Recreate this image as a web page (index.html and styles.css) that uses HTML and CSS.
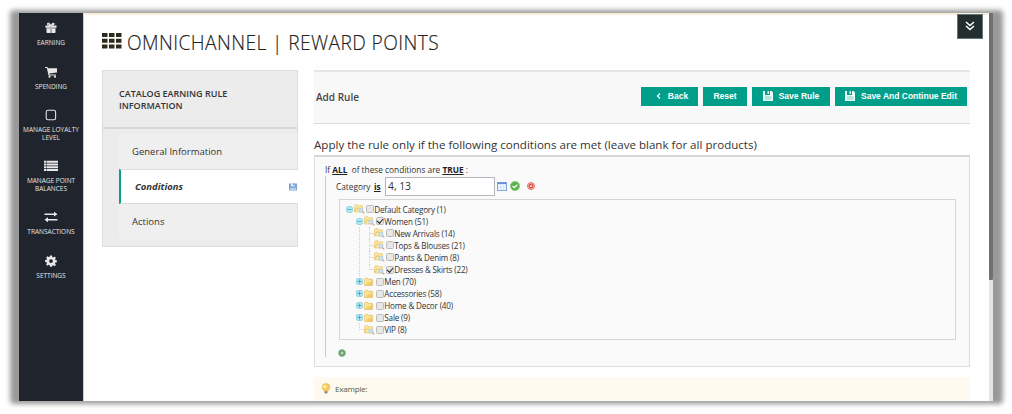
FILE: index.html
```
<!DOCTYPE html>
<html lang="en">
<head>
<meta charset="utf-8">
<title>Omnichannel | Reward Points</title>
<link rel="stylesheet" href="styles.css">
</head>
<body>
<svg width="0" height="0" class="defs">
  <defs>
    <linearGradient id="fold" x1="0" y1="0" x2="1" y2="1"><stop offset="0" stop-color="#fdeeb0"/><stop offset="1" stop-color="#f0bf45"/></linearGradient>
    <symbol id="folder" viewBox="0 0 11 10"><path d="M.5 8.500V2L1.200 1.200H3.800L4.700 2.300H8.300V3.500H9L8.400 8.500Z" fill="url(#fold)" stroke="#e3bd68" stroke-width=".7"/><path d="M1.200 8 2.200 4.200H8.500" fill="none" stroke="#fff3c5" stroke-width=".6"/></symbol>
    <symbol id="folder-search" viewBox="0 0 11 10"><path d="M.5 8V1.500L1.200.7H3.800L4.700 1.800H8.600V8Z" fill="#fae7a6" stroke="#e6c576" stroke-width=".7"/><path d="M1 7.500 2.500 4H5" fill="none" stroke="#eebd50" stroke-width=".8"/><circle cx="6.900" cy="6.100" r="2" fill="#c9e4fa" stroke="#9fc5e8" stroke-width=".7"/><path d="m8.500 7.700 1.800 1.700" stroke="#c49b72" stroke-width="1.100"/></symbol>
    <symbol id="minus" viewBox="0 0 7 7"><rect x=".5" y=".5" width="6" height="6" rx="1.800" fill="#b5e6f0" stroke="#8fd3e2" stroke-width=".9"/><path d="M1.500 3.500h4" stroke="#45adc3" stroke-width=".8"/></symbol>
    <symbol id="plus" viewBox="0 0 7 7"><rect x=".5" y=".5" width="6" height="6" rx="1.500" fill="#b5e6f0" stroke="#8fd3e2" stroke-width=".9"/><path d="M1.500 3.500h4M3.500 1.500v4" stroke="#2fa3bb" stroke-width=".8"/></symbol>
    <symbol id="disk" viewBox="0 0 10 10"><path d="M0 0H2V4H7V0H8.500L10 1.500V10H0Z" fill="#e8fffa"/><path d="M4.500 .2h1.500v2.600H4.500z" fill="#fff"/><path d="M2 6h6.500M2 8h6.500" stroke="#58b9a9" stroke-width=".7"/></symbol>
  </defs>
</svg>
<div class="window">
  <nav class="rail">
    <a class="rail-item earning"><svg viewBox="0 0 12 12"><path d="M1.500 6.300H5V11H2.200Q1.500 11 1.500 10.300ZM7 6.300h3.500v4q0 .7-.7.700H7ZM.5 3.500h4.600v2.200H.5ZM6.900 3.500h4.600v2.200H6.900ZM5.300 3.500h1.400V11H5.300Z"/><path d="M5.600 3.400Q3.900.4 2.700 1.400 1.700 3 5.600 3.400 9.700 3 9 1.500 7.800.5 6.300 3.400" fill="none" stroke="#e8e8e8" stroke-width="1.100"/></svg><span>EARNING</span></a>
    <a class="rail-item spending"><svg viewBox="0 0 12 12"><path d="M0 1h2.500l.4 1.200H12V6.500L4.300 7.500l.2 1H11v1H3.500L1.900 2H0Z"/><circle cx="4.500" cy="10.700" r="1.100"/><circle cx="9.900" cy="10.700" r="1.100"/></svg><span>SPENDING</span></a>
    <a class="rail-item level"><svg viewBox="0 0 12 12"><rect x="1.200" y="1.200" width="9.400" height="9.600" rx="1.700" fill="none" stroke="#e2e2e2" stroke-width="1.100"/></svg><span>MANAGE LOYALTY<br>LEVEL</span></a>
    <a class="rail-item balances"><svg viewBox="0 0 14 12"><path d="M0 .8h2v2H0zM2.500 .8H14v2H2.500zM0 3.500h2v2H0zM2.500 3.500H14v2H2.500zM0 6.200h2v2H0zM2.500 6.200H14v2H2.500zM0 8.900h2v2H0zM2.500 8.900H14v2H2.500z"/></svg><span>MANAGE POINT<br>BALANCES</span></a>
    <a class="rail-item transactions"><svg viewBox="0 0 14 12"><path d="M.5 2.500H10V.7l3.500 2.500L10 5.600V4H.5ZM13.500 8H4V6.300L.5 8.800 4 11.200V9.500h9.500Z"/></svg><span>TRANSACTIONS</span></a>
    <a class="rail-item settings"><svg viewBox="0 0 12 12"><path fill-rule="evenodd" d="M5 .5h2l.3 1.600 1 .4L9.700 1.600l1.200 1.300-.9 1.300.4.900 1.500.3v1.900l-1.500.3-.4 1 .9 1.300-1.300 1.300-1.300-.9-1 .4L7 11.700H5l-.3-1.500-1-.4-1.300.9L1.100 9.400 2 8.100l-.4-.9L.1 6.900V5l1.500-.3.400-1-.9-1.300 1.300-1.200 1.300.9 1-.4ZM6 4.200A1.900 1.900 0 1 0 6 8a1.900 1.900 0 0 0 0-3.800Z"/></svg><span>SETTINGS</span></a>
  </nav>
  <div class="page">
    <header class="title-row">
      <svg class="grid-icon" viewBox="0 0 20 16"><path d="M0 0h5.500v4H0zM7 0h5.500v4H7zM14 0h5.500v4H14zM0 5.700h5.500v4H0zM7 5.700h5.500v4H7zM14 5.700h5.500v4H14zM0 11.400h5.500v4H0zM7 11.400h5.500v4H7zM14 11.400h5.500v4H14z" fill="#2c2a1d"/></svg>
      <h1>OMNICHANNEL | REWARD POINTS</h1>
      <button class="collapse" aria-label="Expand"><svg viewBox="0 0 10 10"><path d="m1 1 4 3.500L9 1M1 5l4 3.500L9 5" fill="none" stroke="#fff" stroke-width="1.500"/></svg></button>
    </header>
    <div class="columns">
      <aside class="side">
        <h2>CATALOG EARNING RULE<br>INFORMATION</h2>
        <ul>
          <li>General Information</li>
          <li class="active"><span>Conditions</span><svg class="save-mark" viewBox="0 0 8 8"><path d="M0 .5h8v7H0z" fill="#7fa4d8"/><path d="M2 .5h4v3H2z" fill="#dbe9f9"/><path d="M4.500.5h1v2h-1z" fill="#3d6eb5"/><path d="M1 5h6v2.500H1z" fill="#b9d0ed"/></svg></li>
          <li>Actions</li>
        </ul>
      </aside>
      <main>
        <div class="toolbar">
          <h3>Add Rule</h3>
          <div class="buttons">
            <button class="btn back"><svg viewBox="0 0 5 8"><path d="M4 1.500 1.500 4 4 6.500" fill="none" stroke="#fff" stroke-width="1.200"/></svg><span>Back</span></button>
            <button class="btn reset"><span>Reset</span></button>
            <button class="btn save"><svg><use href="#disk"/></svg><span>Save Rule</span></button>
            <button class="btn continue"><svg><use href="#disk"/></svg><span>Save And Continue Edit</span></button>
          </div>
        </div>
        <h4>Apply the rule only if the following conditions are met (leave blank for all products)</h4>
        <section class="rule">
          <p class="if-line">If <b>ALL</b>&nbsp; of these conditions are <b>TRUE</b> :</p>
          <div class="branch">
            <div class="condition"><span class="cat">Category</span><b>is</b><input type="text" value="4, 13">
              <svg class="picker" viewBox="0 0 10 9"><rect x=".5" y=".5" width="9" height="8" fill="#edf4fd" stroke="#7fa3da"/><path d="M.5 1.300h9" stroke="#6791d2" stroke-width="1.600"/><path d="M3.500 2.500v6M6.500 2.500v6M1 5h8" stroke="#d0e0f5" stroke-width=".6"/></svg>
              <svg class="ok" viewBox="0 0 10 10"><circle cx="5" cy="5" r="4.600" fill="#58b34e" stroke="#8cc985" stroke-width=".8"/><path d="m2.600 5 1.800 1.700 3-3.100" fill="none" stroke="#fff" stroke-width="1.300"/></svg>
              <svg class="no" viewBox="0 0 8 8"><circle cx="4" cy="4" r="3.500" fill="#f3b0aa" stroke="#e8766d"/><circle cx="4" cy="4" r="2.300" fill="#dd4f46"/><path d="m3 3 2 2m0-2L3 5" stroke="#ffe5df" stroke-width=".8"/></svg>
            </div>
            <div class="tree">
              <div class="node"><svg class="tog"><use href="#minus"/></svg><svg class="fs"><use href="#folder-search"/></svg><i class="box"></i>Default Category (1)</div>
              <div class="children">
                <div class="node"><svg class="tog"><use href="#minus"/></svg><svg class="fs"><use href="#folder-search"/></svg><i class="box checked"></i>Women (51)</div>
                <div class="children leafs">
                  <div class="node"><i class="twig"></i><svg class="fs"><use href="#folder-search"/></svg><i class="box"></i>New Arrivals (14)</div>
                  <div class="node"><i class="twig"></i><svg class="fs"><use href="#folder-search"/></svg><i class="box"></i>Tops &amp; Blouses (21)</div>
                  <div class="node"><i class="twig"></i><svg class="fs"><use href="#folder-search"/></svg><i class="box"></i>Pants &amp; Denim (8)</div>
                  <div class="node"><i class="twig last"></i><svg class="fs"><use href="#folder-search"/></svg><i class="box checked"></i>Dresses &amp; Skirts (22)</div>
                </div>
                <div class="node"><svg class="tog"><use href="#plus"/></svg><svg class="fs"><use href="#folder"/></svg><i class="box"></i>Men (70)</div>
                <div class="node"><svg class="tog"><use href="#plus"/></svg><svg class="fs"><use href="#folder"/></svg><i class="box"></i>Accessories (58)</div>
                <div class="node"><svg class="tog"><use href="#plus"/></svg><svg class="fs"><use href="#folder"/></svg><i class="box"></i>Home &amp; Decor (40)</div>
                <div class="node"><svg class="tog"><use href="#plus"/></svg><svg class="fs"><use href="#folder"/></svg><i class="box"></i>Sale (9)</div>
                <div class="node end"><i class="elbow"></i><svg class="fs"><use href="#folder-search"/></svg><i class="box"></i>VIP (8)</div>
              </div>
            </div>
            <svg class="add" viewBox="0 0 8 8"><circle cx="4" cy="4" r="3.500" fill="#5c965d" stroke="#a2c6a2" stroke-width=".9"/><path d="M4 2.200v3.600M2.200 4h3.600" stroke="#d9f0d6" stroke-width=".9"/></svg>
          </div>
        </section>
        <div class="hint"><svg viewBox="0 0 10 11"><path d="M5 .5a4 4 0 0 1 4 4C9 6.500 7 7 6.800 8.300H3.200C3 7 1 6.500 1 4.500a4 4 0 0 1 4-4Z" fill="#f8c95c" stroke="#eeb65a" stroke-width=".6"/><circle cx="3.800" cy="3.600" r="1.700" fill="#fff3bd"/><path d="M3.400 8.300h3.200v1.500L5.800 10.500H4.200l-.8-.7z" fill="#8b8b94"/></svg><span>Example:</span></div>
      </main>
    </div>
  </div>
  <div class="scrollbar"><div class="thumb"></div></div>
</div>
</body>
</html>
```
FILE: styles.css
```
* { box-sizing: border-box; }
body { margin: 0; width: 1012px; height: 414px; overflow: hidden; padding: 13px 19px; background: #fff; position: relative; font-family: "Open Sans", sans-serif; color: #333; }
body::before { content: ""; position: absolute; left: 10px; top: 10px; width: 993px; height: 394px; border-radius: 4px; background: #999; filter: blur(2.8px); }
h1, h2, h3, h4, p, ul { margin: 0; padding: 0; font-weight: 400; }
svg { display: block; flex: none; }
button { border: 0; padding: 0; }
.defs { position: absolute; }
.window { position: relative; width: 974px; height: 388px; display: flex; background: #fff; overflow: hidden; }
.rail { width: 64px; flex: none; background: #20252d; display: flex; flex-direction: column; color: #e4e4e4; font-size: 6.500px; line-height: 8px; text-align: center; }
.rail-item { display: flex; flex-direction: column; align-items: center; gap: 5px; height: 43px; white-space: nowrap; }
.rail-item svg { height: 12px; width: 14px; fill: #e8e8e8; }
.earning { padding-top: 9px; height: 52.500px; }
.level { height: 51px; }
.balances { height: 51.500px; }
.transactions { height: 43.500px; }
.page { width: 905px; flex: none; border-top: 2px solid #faeedd; border-left: 1px solid #ccc; padding-left: 18px; }
.title-row { display: flex; height: 55px; align-items: flex-start; }
.grid-icon { width: 20px; height: 16px; margin-top: 18px; }
h1 { flex: 1; margin: 14px 0 0 5px; font-size: 19.200px; letter-spacing: .4px; line-height: 28px; font-weight: 300; color: #22221b; -webkit-text-stroke: .15px #22221b; white-space: nowrap; }
.collapse { width: 26px; height: 25px; margin: -1px 5px 0 0; background: #232e2e; border: 1px solid #677; display: flex; justify-content: center; align-items: center; padding-bottom: 2px; }
.collapse svg { width: 10px; height: 10px; }
.columns { display: flex; gap: 16px; }
.side { width: 196px; height: 177px; background: #ececec; border: 1px solid #dddee1; border-right-color: #dcdfe5; }
.side h2 { height: 58px; padding: 17px 0 0 16px; border-bottom: 2px solid #d6d7d9; font-size: 9px; line-height: 12px; font-weight: 600; color: #333; white-space: nowrap; }
.side ul { list-style: none; margin: 5px 0 0 16px; font-size: 9.500px; background: #efefef; }
.side li { height: 35px; padding-left: 13px; display: flex; align-items: center; }
.side .active { background: #fff; border: 1px solid #dadcdd; border-width: 1px 0; border-left: 2px solid #08a183; font-style: italic; font-weight: 700; margin-right: -1px; padding: 0 1px 0 14px; justify-content: space-between; }
.save-mark { width: 8px; height: 8px; }
main { width: 656px; }
.toolbar { height: 54px; background: #f8f8f8; border-top: 2px solid #e6e6e6; border-bottom: 1px solid #ddd; display: flex; justify-content: space-between; padding: 0 3px 3px 2px; align-items: center; }
.toolbar h3 { font-size: 10px; font-weight: 600; color: #444; padding-top: 2px; }
.buttons { display: flex; gap: 5px; }
.btn { height: 19px; background: #019f8a; color: #fff; font: bold 8.500px "Liberation Sans", sans-serif; display: flex; align-items: center; justify-content: center; white-space: nowrap; }
.btn svg { width: 10px; height: 10px; }
.back { width: 57px; gap: 7px; padding-left: 5px; }
.back svg { width: 5px; height: 8px; }
.reset { width: 44px; }
.save { width: 78px; gap: 6px; }
.continue { width: 132px; gap: 6px; }
h4 { height: 31px; padding-top: 13px; font-size: 11.570px; line-height: 16px; white-space: nowrap; color: #333; }
.rule { height: 212px; background: #fafafa; border: 1px solid #ddd; border-top: 2px solid #d6d6d6; padding: 6px 12px 0 10px; font-size: 8.300px; color: #333; }
.if-line { line-height: 13px; height: 13px; white-space: pre; }
.rule b { text-decoration: underline; color: #222; }
.branch { border-left: 1px solid #ccc; height: 181px; padding-left: 13px; }
.condition { display: flex; align-items: center; height: 20px; }
.condition .cat { width: 38px; margin-left: -3px; }
.condition b { width: 11px; }
.condition input { width: 110px; height: 19px; border: 1px solid #b5b5bd; background: #fff; font: 10.300px "Open Sans", sans-serif; padding: 0 2px; color: #333; }
.picker { width: 10px; height: 9px; margin-left: 2px; }
.ok { width: 10px; height: 10px; margin-left: 3px; }
.no { width: 8px; height: 8px; margin-left: 7px; }
.tree { width: 617px; height: 141px; margin-top: 3px; border: 1px solid #d5d5d5; padding: 3px 0 0 5.500px; font-size: 8.100px; letter-spacing: -.17px; }
.node { display: flex; align-items: center; height: 12.100px; white-space: nowrap; }
.tog { width: 7px; height: 7px; margin-right: 1px; }
.fs { width: 11px; height: 10px; margin-right: 1px; }
.box { width: 8px; height: 8px; margin-right: .8px; border: 1px solid #bbb; border-radius: 1.500px; background: #e7e7e7; flex: none; }
.checked::after { content: ""; display: block; width: 3px; height: 5px; margin: 0 0 0 1.500px; border: solid #222; border-width: 0 1.200px 1.200px 0; transform: translateY(-.7px) rotate(40deg); }
.children { padding-left: 10px; }
.leafs { margin-left: 3px; border-left: 1px dotted #ccc; padding-left: 9px; }
.twig { width: 5px; height: 12px; border-left: 1px dotted #ccc; background: linear-gradient(#ddd, #ddd) 0 6px / 4px 1px no-repeat; flex: none; }
.twig.last { height: 6px; margin-top: -6px; background-position: 0 5px; }
.elbow { width: 5px; height: 7px; margin: -7px 0 0 3px; border: 1px dotted #ccc; border-width: 0 0 1px 1px; }
.add { width: 8px; height: 8px; margin: 9px 0 0 -1px; }
.hint { height: 40px; margin-top: 10px; padding: 6px 0 0 7px; background: #fffaf0; display: flex; gap: 4px; font-size: 8px; letter-spacing: -.2px; line-height: 11px; color: #526038; }
.hint svg { width: 10px; height: 11px; }
.scrollbar { width: 4px; margin-left: auto; background: #e4e4e4; }
.thumb { height: 267px; background: #707070; border-radius: 0 0 1px 1px; }
```
